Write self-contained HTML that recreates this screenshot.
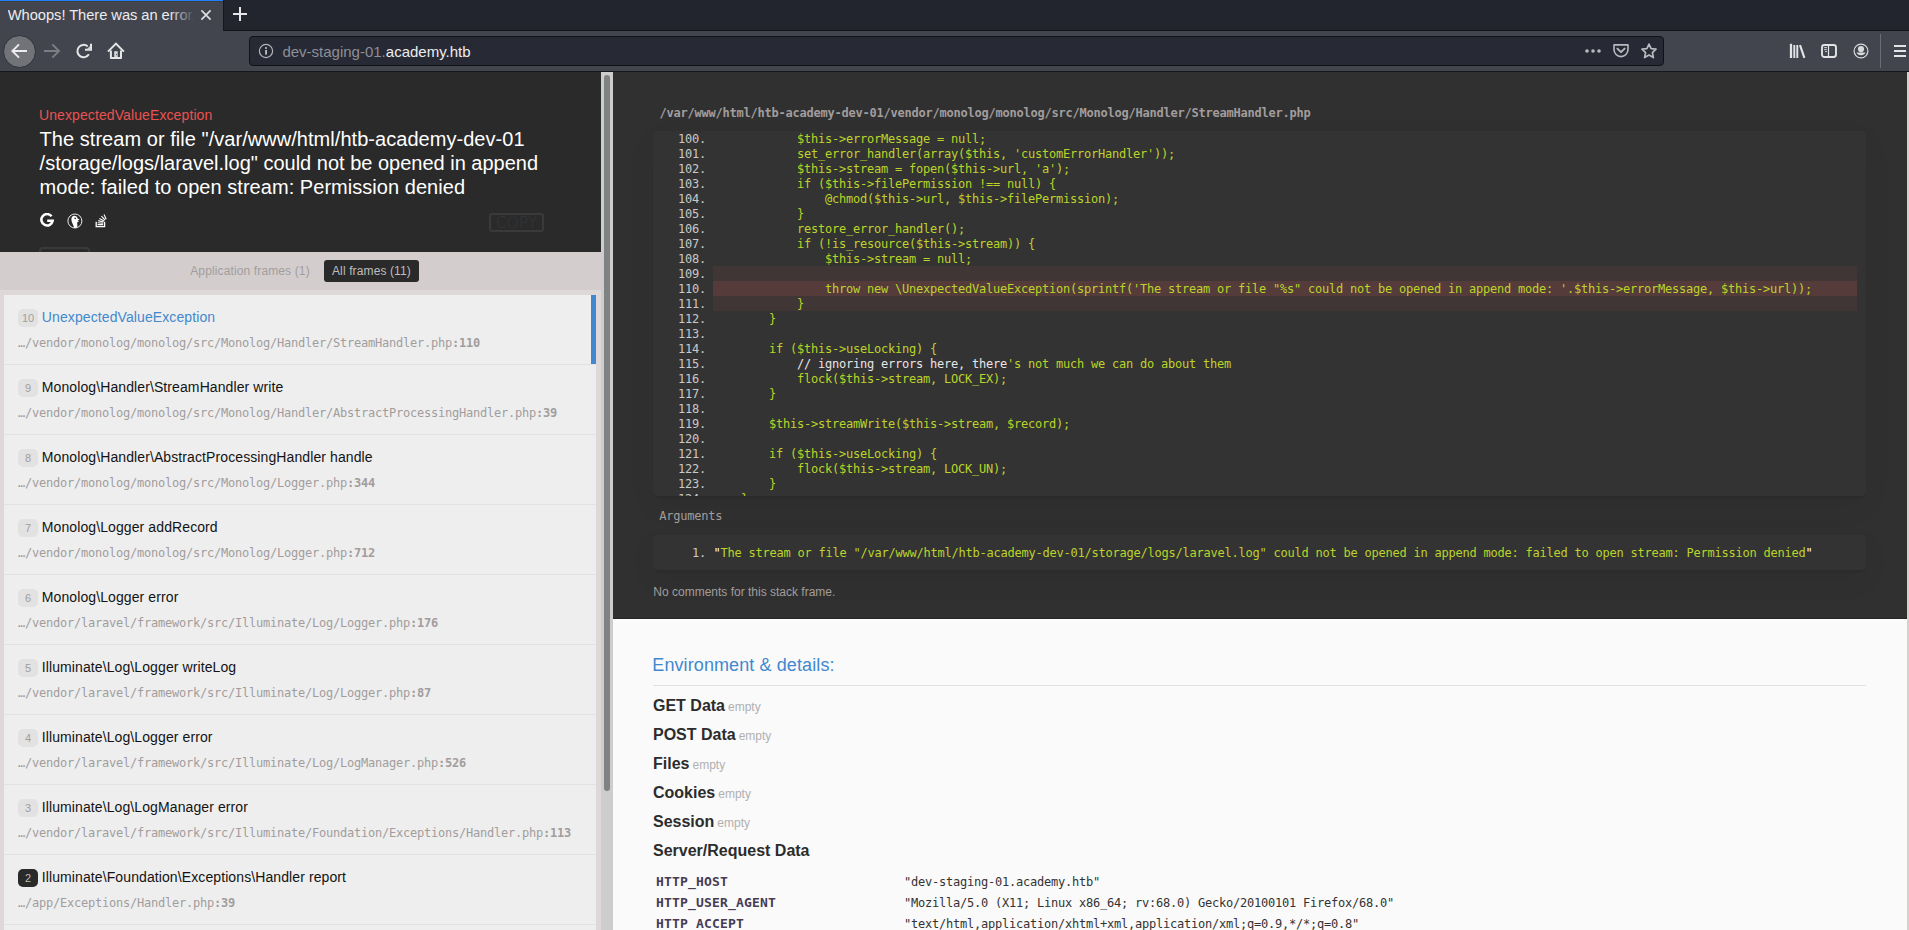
<!DOCTYPE html>
<html lang="en">
<head>
<meta charset="utf-8">
<title>Whoops! There was an error.</title>
<style>
*{box-sizing:border-box}
html,body{margin:0;padding:0}
body{width:1909px;height:930px;overflow:hidden;position:relative;background:#303030;
  font-family:"Liberation Sans",Arial,sans-serif;font-size:12px;color:#131313;
  -webkit-font-smoothing:antialiased}
.abs{position:absolute}
.mono{font-family:"DejaVu Sans Mono","Liberation Mono",monospace;font-size:12px;letter-spacing:-0.2246px;white-space:pre}

/* ---------- browser chrome ---------- */
#tabbar{left:0;top:0;width:1909px;height:31px;background:#23252e;border-bottom:1px solid #14161b}
#tab{left:0;top:0;width:224px;height:31px;background:#42454e;border-right:1px solid #16181e}
#tab .line{left:0;top:0;width:223px;height:1px;background:#1e82ff}
#tab .line2{left:0;top:1px;width:223px;height:1px;background:#3e3d40}
#tabtitle{left:7.8px;top:5px;width:186px;height:21px;overflow:hidden;white-space:nowrap;
  font-size:14.7px;line-height:21px;color:#ececef;letter-spacing:-0.05px}
#tabfade{left:170px;top:3px;width:26px;height:26px;background:linear-gradient(90deg,rgba(66,69,78,0),#42454e 96%)}
#navbar{left:0;top:31px;width:1909px;height:41px;background:#42454e;border-bottom:1px solid #15171c}
#backbtn{left:3px;top:34.5px;width:33px;height:33px;border-radius:50%;background:#717378;border:1px solid #2f3138}
#urlbar{left:249px;top:36px;width:1415px;height:30px;background:#272935;border:1px solid #111217;border-radius:4px}
#urltext{left:282.4px;top:42px;font-size:15px;line-height:20px;color:#ededf0;white-space:nowrap}
#urltext span{color:#8d8f96}
#sep{left:1880px;top:34px;width:1px;height:34px;background:#6a6c74}

/* ---------- whoops page ---------- */
#left{left:0;top:72px;width:601px;height:858px;background:#ded8d8;overflow:hidden}
#lscroll{left:601px;top:72px;width:12px;height:858px;background:#cdcdcd}
#lthumb{left:604px;top:75px;width:6px;height:716px;background:#7f8282;border-radius:3px}
#rscroll{left:1907px;top:72px;width:2px;height:858px;background:#d4d1cf}
#hdr{left:0;top:0;width:601px;height:180px;background:#2a2a2a;overflow:hidden}
#right{left:613px;top:72px;width:1294px;height:858px;background:#fafafa;overflow:hidden}
#dark{left:0;top:0;width:1294px;height:547px;background:#303030;border-bottom:1px solid #242424}
#wline{left:0;top:547px;width:1294px;height:1px;background:#fff}

#exct{left:39px;top:35px;font-size:14px;line-height:16px;color:#e95353;white-space:nowrap;letter-spacing:.1px}
#excm{left:39.6px;top:55px;font-size:20px;line-height:24px;color:#fff;white-space:nowrap;letter-spacing:.042px}
#copy{left:489px;top:141px;width:55px;height:19px;border:2px solid #3a3a3a;border-radius:3px;color:#363839;
  font-family:"DejaVu Sans","Liberation Sans",sans-serif;font-weight:200;font-size:15.5px;line-height:16px;text-align:center;letter-spacing:-.1px}
#hbtn{left:39px;top:175px;width:51px;height:20px;border:2px solid #3a3a3a;border-radius:4px}
#fdesc{left:0;top:180px;width:601px;height:38px;background:#d3cdcd}
#tab1{left:190.2px;top:192px;font-size:12px;line-height:14px;color:#a29d9d;white-space:nowrap;letter-spacing:.13px}
#tab2{left:324px;top:188px;width:95px;height:22px;background:#2a2a2a;border-radius:3px;color:#bebebe;font-size:12px;line-height:22px;padding-left:8px;white-space:nowrap;letter-spacing:.12px}
.fr{left:4px;width:592px;height:70px;background:#eee;border-bottom:1px solid #e2e2e2}
.fr.act{box-shadow:inset -5px 0 0 0 #4288ce}
.fr .ix{left:14px;top:14px;width:20px;height:18px;border-radius:5px;background:#e2e2e2;color:#a29d9d;font-size:11px;line-height:18px;text-align:center}
.fr .ix.app{background:#2a2a2a;color:#bebebe}
.fr .ti{left:37.8px;top:13px;font-size:14px;line-height:18px;color:#131313;white-space:nowrap;letter-spacing:.1px}
.fr.act .ti{color:#4288ce}
.fr .fi{left:14px;top:41px;line-height:15px;color:#a29d9d}
.fr .fi b{font-weight:bold}

#fpath{left:46.6px;top:34px;font-weight:bold;color:#a29d9d;line-height:15px}
#code{left:40px;top:59px;width:1213px;height:365px;background:#333;border-radius:6px;overflow:hidden;
  box-shadow:0 3px 0 rgba(0,0,0,.05),0 10px 30px rgba(0,0,0,.05),inset 0 0 1px 0 rgba(255,255,255,.07)}
#code .ln{position:absolute;left:0;width:1213px;height:15px;line-height:17px;color:#bcd42a}
#code .ln i{position:absolute;left:0;width:53px;text-align:right;font-style:normal;color:#c9c9c9}
#code .ln s{position:absolute;left:60px;width:1144px;height:15px;text-decoration:none}
#code .ln.c1 s{background:#413636}
#code .ln.c2 s{background:#563b3b}
#code .ln u{text-decoration:none;color:#e9e4e5}
#argl{left:46.2px;top:437px;color:#a29d9d;line-height:15px}
#args{left:40px;top:463px;width:1213px;height:35px;background:#333;border-radius:6px;
  box-shadow:0 3px 0 rgba(0,0,0,.05),0 10px 30px rgba(0,0,0,.05),inset 0 0 1px 0 rgba(255,255,255,.07)}
#args i{position:absolute;left:0;top:11px;width:53px;text-align:right;font-style:normal;color:#c9c9c9;line-height:15px}
#args s{position:absolute;left:60.5px;top:11px;text-decoration:none;color:#bcd42a;line-height:15px}
#args s u{text-decoration:none;color:#fff}
#nocom{left:40.3px;top:513px;font-size:12px;line-height:14px;color:#a29d9d;white-space:nowrap}

#envh{left:39.3px;top:583px;font-size:18px;line-height:21px;color:#4288ce;white-space:nowrap;letter-spacing:.1px}
#envl{left:40px;top:613px;width:1213px;height:1px;background:#e1e1e1}
.dl{left:40px;font-size:16px;font-weight:bold;line-height:19px;color:#2c2c2c;white-space:nowrap}
.dl em{font-style:normal;font-weight:normal;font-size:12px;color:#b0b0b0;margin-left:3px}
.dk{left:43px;font-family:"DejaVu Sans Mono","Liberation Mono",monospace;font-size:13px;font-weight:bold;letter-spacing:.1733px;color:#463c54;white-space:pre;line-height:16px}
.dv{left:291px;color:#333;line-height:15px}
</style>
</head>
<body>

<!-- ================= BROWSER CHROME ================= -->
<div id="tabbar" class="abs"></div>
<div id="tab" class="abs">
  <div class="line abs"></div><div class="line2 abs"></div>
  <div id="tabtitle" class="abs">Whoops! There was an error.</div>
  <div id="tabfade" class="abs"></div>
  <svg class="abs" style="left:200px;top:9px" width="12" height="12" viewBox="0 0 12 12"><path d="M1.9 1.9 L10.1 10.1 M10.1 1.9 L1.9 10.1" stroke="#dddde0" stroke-width="1.7" stroke-linecap="round" fill="none"/></svg>
</div>
<svg class="abs" style="left:232px;top:6px" width="16" height="16" viewBox="0 0 16 16"><path d="M8 1 V15 M1 8 H15" stroke="#e6e6e8" stroke-width="2" fill="none"/></svg>

<div id="navbar" class="abs"></div>
<div id="backbtn" class="abs"></div>
<!-- back -->
<svg class="abs" style="left:11px;top:43px" width="17" height="16" viewBox="0 0 17 16"><path d="M16 8 H1.6 M8 1.4 L1.3 8 L8 14.6" stroke="#ececee" stroke-width="2" stroke-linejoin="miter" fill="none"/></svg>
<!-- forward -->
<svg class="abs" style="left:44px;top:43px" width="17" height="16" viewBox="0 0 17 16"><path d="M0 8 H14.6 M8.3 1.4 L15 8 L8.3 14.6" stroke="#7b7d84" stroke-width="2" stroke-linejoin="miter" fill="none"/></svg>
<!-- reload -->
<svg class="abs" style="left:76px;top:43px" width="17" height="16" viewBox="0 0 17 16"><path d="M12.9 11.3 A6.2 6.2 0 1 1 11.7 3.4" stroke="#e6e6e8" stroke-width="2" fill="none"/><path d="M15 0.7 V6.8 H9" stroke="#e6e6e8" stroke-width="2" fill="none"/><path d="M14.4 2.6 V6.4 H10.6 Z" fill="#d0d0d3"/></svg>
<!-- home -->
<svg class="abs" style="left:107px;top:42px" width="18" height="18" viewBox="0 0 18 18"><path d="M1 9.6 L8.95 1.6 L16.9 9.6" stroke="#e6e6e8" stroke-width="2" fill="none"/><path d="M3.9 8.4 V15.9 H14 V8.4" stroke="#e6e6e8" stroke-width="2" stroke-linejoin="round" fill="none"/><rect x="7.2" y="9.2" width="3.5" height="6" fill="#d8d8db"/><circle cx="9.6" cy="12.6" r=".6" fill="#42454e"/></svg>

<div id="urlbar" class="abs"></div>
<!-- info -->
<svg class="abs" style="left:258px;top:43px" width="16" height="16" viewBox="0 0 16 16"><circle cx="8" cy="8" r="6.6" stroke="#b4b5ba" stroke-width="1.2" fill="none"/><rect x="7.2" y="7" width="1.7" height="4.6" fill="#c9cacd"/><circle cx="8" cy="4.9" r="1" fill="#c9cacd"/></svg>
<div id="urltext" class="abs"><span>dev-staging-01.</span>academy.htb</div>
<!-- dots -->
<svg class="abs" style="left:1584px;top:48px" width="18" height="6" viewBox="0 0 18 6"><circle cx="3" cy="3" r="1.8" fill="#b9babf"/><circle cx="9" cy="3" r="1.8" fill="#b9babf"/><circle cx="15" cy="3" r="1.8" fill="#b9babf"/></svg>
<!-- pocket -->
<svg class="abs" style="left:1613px;top:43px" width="16" height="16" viewBox="0 0 16 16"><path d="M1 1.9 H15 V6.6 A7 7 0 0 1 1 6.6 Z" stroke="#b9babf" stroke-width="1.6" stroke-linejoin="round" fill="none"/><path d="M4.4 5.6 L8 9.2 L11.6 5.6" stroke="#b9babf" stroke-width="1.9" stroke-linecap="round" stroke-linejoin="round" fill="none"/></svg>
<!-- star -->
<svg class="abs" style="left:1641px;top:43px" width="16" height="16" viewBox="0 0 16 16"><path d="M8 1.1 L10.1 5.6 L15 6.2 L11.4 9.7 L12.4 14.6 L8 12.1 L3.6 14.6 L4.6 9.7 L1 6.2 L5.9 5.6 Z" stroke="#b9babf" stroke-width="1.7" stroke-linejoin="round" fill="none"/></svg>
<!-- library -->
<svg class="abs" style="left:1789px;top:43px" width="17" height="16" viewBox="0 0 17 16"><path d="M2 0.8 V15" stroke="#e4e4e6" stroke-width="2.3" fill="none"/><path d="M5.3 1.9 V15 M8.3 1.9 V15" stroke="#e4e4e6" stroke-width="1.9" fill="none"/><path d="M11 2.1 L15.4 14.8" stroke="#e4e4e6" stroke-width="2.1" fill="none"/></svg>
<!-- sidebar -->
<svg class="abs" style="left:1821px;top:43px" width="16" height="16" viewBox="0 0 16 16"><rect x="1" y="2" width="14" height="12" rx="2.4" stroke="#e4e4e6" stroke-width="1.9" fill="none"/><path d="M7.5 2 V14" stroke="#e4e4e6" stroke-width="1.2"/><path d="M3.1 4.6 H6 M3.1 6.6 H5.8 M4 8.6 H6" stroke="#e4e4e6" stroke-width=".9"/></svg>
<!-- account -->
<svg class="abs" style="left:1853px;top:43px" width="16" height="16" viewBox="0 0 16 16"><circle cx="8" cy="8" r="6.9" stroke="#d9d9dc" stroke-width="1.2" fill="none"/><circle cx="8" cy="6.1" r="3.1" fill="#d9d9dc"/><path d="M3.6 9.6 H12.4 A4.6 3.8 0 0 1 3.6 9.6 Z" fill="#d9d9dc"/></svg>
<div id="sep" class="abs"></div>
<!-- hamburger -->
<svg class="abs" style="left:1894px;top:43px" width="12" height="16" viewBox="0 0 12 16"><path d="M0 3 H12 M0 8 H12 M0 13 H12" stroke="#e4e4e6" stroke-width="2"/></svg>

<!-- ================= PAGE ================= -->
<div id="left" class="abs">
  <div id="hdr" class="abs">
    <div id="exct" class="abs">UnexpectedValueException</div>
    <div id="excm" class="abs">The stream or file "/var/www/html/htb-academy-dev-01<br><span style="letter-spacing:-.002px">/storage/logs/laravel.log" could not be opened in append</span><br>mode: failed to open stream: Permission denied</div>
    <!-- google -->
    <svg class="abs" style="left:40px;top:141px" width="14" height="14" viewBox="0 0 14 14"><path d="M11.6 3.3 A5.7 5.7 0 1 0 12.7 7.8 H7.2" stroke="#fff" stroke-width="2.5" fill="none"/></svg>
    <!-- duckduckgo -->
    <svg class="abs" style="left:66.5px;top:140.5px" width="16" height="16" viewBox="0 0 16 16"><circle cx="7.9" cy="8" r="7" stroke="#fff" stroke-width="0.9" fill="none"/><path d="M5.4 3.4 C7.4 1.8 10.6 3.2 10.6 5.6 L12.6 6.4 L10.6 7.5 L12 8.4 L10.2 9.2 L10.4 14.6 L7.2 15 C6.4 11.8 4 8.6 4.4 5.8 C4.5 4.8 4.8 4 5.4 3.4 Z" fill="#fff"/><circle cx="8.2" cy="5.4" r=".8" fill="#2a2a2a"/></svg>
    <!-- stackoverflow -->
    <svg class="abs" style="left:95px;top:140px" width="13" height="16" viewBox="0 0 13 16"><path d="M1.2 9.8 V14.6 H9.6 V9.8" stroke="#fff" stroke-width="1.3" fill="none"/><path d="M2.6 12.6 H8.2 M2.7 10.7 L8.2 11.3 M3.2 8.6 L8.5 10 M4.4 6.4 L9.1 8.9 M6.4 4.2 L10 8 M9 2.4 L11.2 7.2" stroke="#fff" stroke-width="1.1" fill="none"/></svg>
    <div id="copy" class="abs">COPY</div>
    <div id="hbtn" class="abs"></div>
</div>
    <div id="fdesc" class="abs"></div>
  <div id="tab1" class="abs">Application frames (1)</div>
  <div id="tab2" class="abs">All frames (11)</div>
  <div class="fr abs act" style="top:223px"><div class="ix abs">10</div><div class="ti abs">UnexpectedValueException</div><div class="fi abs mono">…/vendor/monolog/monolog/src/Monolog/Handler/StreamHandler.php<b>:110</b></div></div>
  <div class="fr abs" style="top:293px"><div class="ix abs">9</div><div class="ti abs">Monolog\Handler\StreamHandler write</div><div class="fi abs mono">…/vendor/monolog/monolog/src/Monolog/Handler/AbstractProcessingHandler.php<b>:39</b></div></div>
  <div class="fr abs" style="top:363px"><div class="ix abs">8</div><div class="ti abs">Monolog\Handler\AbstractProcessingHandler handle</div><div class="fi abs mono">…/vendor/monolog/monolog/src/Monolog/Logger.php<b>:344</b></div></div>
  <div class="fr abs" style="top:433px"><div class="ix abs">7</div><div class="ti abs">Monolog\Logger addRecord</div><div class="fi abs mono">…/vendor/monolog/monolog/src/Monolog/Logger.php<b>:712</b></div></div>
  <div class="fr abs" style="top:503px"><div class="ix abs">6</div><div class="ti abs">Monolog\Logger error</div><div class="fi abs mono">…/vendor/laravel/framework/src/Illuminate/Log/Logger.php<b>:176</b></div></div>
  <div class="fr abs" style="top:573px"><div class="ix abs">5</div><div class="ti abs">Illuminate\Log\Logger writeLog</div><div class="fi abs mono">…/vendor/laravel/framework/src/Illuminate/Log/Logger.php<b>:87</b></div></div>
  <div class="fr abs" style="top:643px"><div class="ix abs">4</div><div class="ti abs">Illuminate\Log\Logger error</div><div class="fi abs mono">…/vendor/laravel/framework/src/Illuminate/Log/LogManager.php<b>:526</b></div></div>
  <div class="fr abs" style="top:713px"><div class="ix abs">3</div><div class="ti abs">Illuminate\Log\LogManager error</div><div class="fi abs mono">…/vendor/laravel/framework/src/Illuminate/Foundation/Exceptions/Handler.php<b>:113</b></div></div>
  <div class="fr abs" style="top:783px"><div class="ix abs app">2</div><div class="ti abs">Illuminate\Foundation\Exceptions\Handler report</div><div class="fi abs mono">…/app/Exceptions/Handler.php<b>:39</b></div></div>
  <div class="fr abs" style="top:853px"><div class="ix abs">1</div><div class="ti abs">Illuminate\Foundation\Exceptions\Handler render</div><div class="fi abs mono">…/vendor/laravel/framework/src/Illuminate/Foundation/Exceptions/Handler.php<b>:37</b></div></div>
</div>
<div id="lscroll" class="abs"></div><div id="lthumb" class="abs"></div>

<div id="right" class="abs">
  <div id="dark" class="abs">    <div id="fpath" class="abs mono">/var/www/html/htb-academy-dev-01/vendor/monolog/monolog/src/Monolog/Handler/StreamHandler.php</div>
    <div id="code" class="abs mono">
      <div class="ln" style="top:0px"><i>100.</i><s>            $this-&gt;errorMessage = null;</s></div>
      <div class="ln" style="top:15px"><i>101.</i><s>            set_error_handler(array($this, 'customErrorHandler'));</s></div>
      <div class="ln" style="top:30px"><i>102.</i><s>            $this-&gt;stream = fopen($this-&gt;url, 'a');</s></div>
      <div class="ln" style="top:45px"><i>103.</i><s>            if ($this-&gt;filePermission !== null) {</s></div>
      <div class="ln" style="top:60px"><i>104.</i><s>                @chmod($this-&gt;url, $this-&gt;filePermission);</s></div>
      <div class="ln" style="top:75px"><i>105.</i><s>            }</s></div>
      <div class="ln" style="top:90px"><i>106.</i><s>            restore_error_handler();</s></div>
      <div class="ln" style="top:105px"><i>107.</i><s>            if (!is_resource($this-&gt;stream)) {</s></div>
      <div class="ln" style="top:120px"><i>108.</i><s>                $this-&gt;stream = null;</s></div>
      <div class="ln c1" style="top:135px"><i>109.</i><s></s></div>
      <div class="ln c2" style="top:150px"><i>110.</i><s>                throw new \UnexpectedValueException(sprintf('The stream or file "%s" could not be opened in append mode: '.$this-&gt;errorMessage, $this-&gt;url));</s></div>
      <div class="ln c1" style="top:165px"><i>111.</i><s>            }</s></div>
      <div class="ln" style="top:180px"><i>112.</i><s>        }</s></div>
      <div class="ln" style="top:195px"><i>113.</i><s></s></div>
      <div class="ln" style="top:210px"><i>114.</i><s>        if ($this-&gt;useLocking) {</s></div>
      <div class="ln" style="top:225px"><i>115.</i><s>            <u>// ignoring errors here, there</u>'s not much we can do about them</s></div>
      <div class="ln" style="top:240px"><i>116.</i><s>            flock($this-&gt;stream, LOCK_EX);</s></div>
      <div class="ln" style="top:255px"><i>117.</i><s>        }</s></div>
      <div class="ln" style="top:270px"><i>118.</i><s></s></div>
      <div class="ln" style="top:285px"><i>119.</i><s>        $this-&gt;streamWrite($this-&gt;stream, $record);</s></div>
      <div class="ln" style="top:300px"><i>120.</i><s></s></div>
      <div class="ln" style="top:315px"><i>121.</i><s>        if ($this-&gt;useLocking) {</s></div>
      <div class="ln" style="top:330px"><i>122.</i><s>            flock($this-&gt;stream, LOCK_UN);</s></div>
      <div class="ln" style="top:345px"><i>123.</i><s>        }</s></div>
      <div class="ln" style="top:360px"><i>124.</i><s>    }</s></div>
    </div>
    <div id="argl" class="abs mono">Arguments</div>
    <div id="args" class="abs mono"><i>1.</i><s><u>"</u>The stream or file "/var/www/html/htb-academy-dev-01/storage/logs/laravel.log" could not be opened in append mode: failed to open stream: Permission denied<u>"</u></s></div>
    <div id="nocom" class="abs">No comments for this stack frame.</div>
  </div>
  <div id="wline" class="abs"></div>
  <div id="envh" class="abs">Environment &amp; details:</div>
  <div id="envl" class="abs"></div>
  <div class="dl abs" style="top:624px">GET Data<em>empty</em></div>
  <div class="dl abs" style="top:653px">POST Data<em>empty</em></div>
  <div class="dl abs" style="top:682px">Files<em>empty</em></div>
  <div class="dl abs" style="top:711px">Cookies<em>empty</em></div>
  <div class="dl abs" style="top:740px">Session<em>empty</em></div>
  <div class="dl abs" style="top:769px">Server/Request Data</div>
  <div class="dk abs" style="top:802px">HTTP_HOST</div><div class="dv abs mono" style="top:803px">"dev-staging-01.academy.htb"</div>
  <div class="dk abs" style="top:823px">HTTP_USER_AGENT</div><div class="dv abs mono" style="top:824px">"Mozilla/5.0 (X11; Linux x86_64; rv:68.0) Gecko/20100101 Firefox/68.0"</div>
  <div class="dk abs" style="top:844px">HTTP_ACCEPT</div><div class="dv abs mono" style="top:845px">"text/html,application/xhtml+xml,application/xml;q=0.9,*/*;q=0.8"</div>
  <div class="dk abs" style="top:865px">HTTP_ACCEPT_LANGUAGE</div><div class="dv abs mono" style="top:866px">"en-US,en;q=0.5"</div>
</div>
<div id="rscroll" class="abs"></div>

</body>
</html>
